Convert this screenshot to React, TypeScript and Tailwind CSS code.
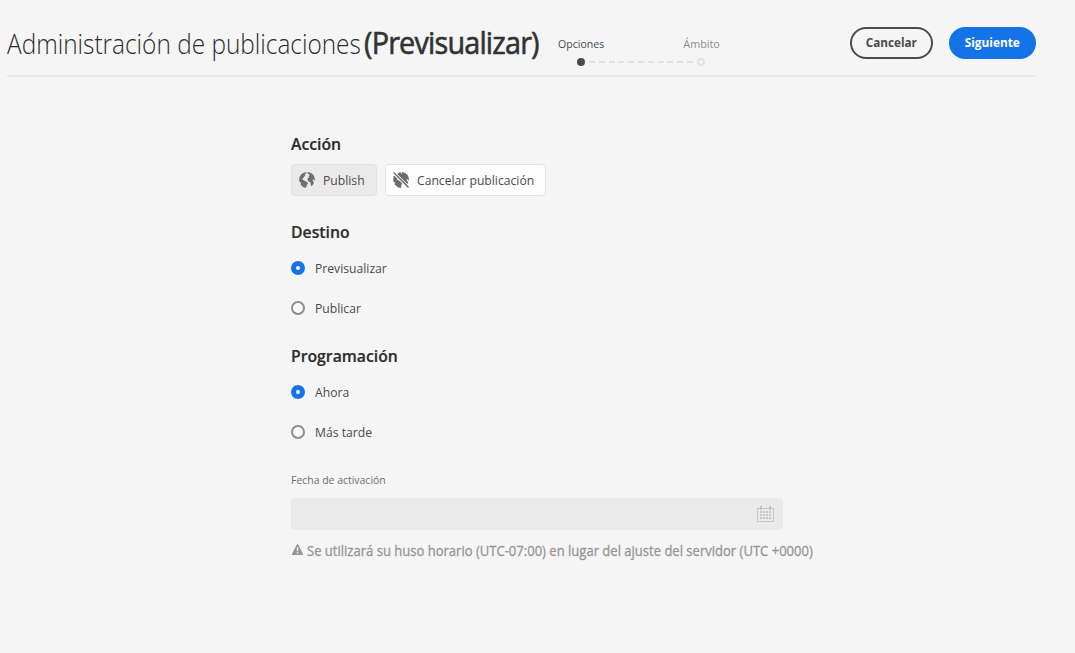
import { useState, type ReactNode } from 'react';

function GlobeIcon() {
  return (
    <svg className="size-4 shrink-0 fill-[#6e6e6e]" viewBox="0 0 16 16" aria-hidden="true">
      <path d="M5.8 0.4 L7.6 0.1 L7.2 1.4 L5.6 2.4 L6.4 3.6 L5.2 4.4 L4.8 5.6 L3.4 6.6 L3.6 7.8 L5 8.2 L6.2 9.2 L8.4 10 L8.8 11.6 L7.8 13 L7.6 14.4 L6.6 15.8 C4.6 15.4 2.9 14.2 1.7 12.7 L1.9 10.8 L0.3 9.2 C-0.2 6.2 0.9 3.2 3.2 1.6 Z" />
      <path d="M8.8 0.1 L10.8 0.5 C13 1.3 14.6 2.9 15.4 5 L16 7.8 L15.4 8.8 L14.6 7.6 L13.4 7.8 L14.2 9.4 L14.9 10.2 L14 12.6 L12.4 14.2 L11.6 12.2 L11.6 10.4 L9.6 9.4 L8.4 7.8 L8.9 6 L10.6 5.2 L9.4 4.4 L10.6 3.2 L9.8 2 L8.4 1.4 Z" />
    </svg>
  );
}

function GlobeStrikeIcon() {
  return (
    <svg className="size-4 shrink-0 fill-[#6e6e6e]" viewBox="0 0 16 16" aria-hidden="true">
      <path d="M0.4 4.2 L1.4 3.8 L4.6 7 L3.8 7.8 L5.4 8.2 L6.4 8.8 L9.2 11.6 L8.4 13 L8 15.9 L5.2 15.4 L1.6 12.6 L1.9 10.8 L0.2 9.2 Z" />
      <path d="M4.8 1.2 L6.8 0.3 L7.8 0.2 L7.8 1.6 L8.8 1.6 L9.2 0.1 L12 0.9 L14.2 2.5 L15.4 4.6 L16 8 L15.4 8.8 L14.8 7.6 L13.4 7.6 L14.2 9.2 L15.3 10.2 L14.3 12 L4.8 2.4 Z" />
      <path d="M0.2 1 L1.2 0 L16 14.8 L15 15.9 Z" />
    </svg>
  );
}

function CalendarIcon() {
  return (
    <svg className="h-4 w-[18px] shrink-0" viewBox="0 0 18 16" shapeRendering="crispEdges" aria-hidden="true">
      <path fill="#c6c6c6" d="M0 2h17v14H0z M1 3v12h15V3z" fillRule="evenodd" />
      <path fill="#c6c6c6" d="M3 0h2v4H3z M12 0h2v4h-2z" />
      <path
        fill="#c6c6c6"
        d="M3 5h2v2H3zM6 5h2v2H6zM9 5h2v2H9zM12 5h2v2h-2zM3 8h2v2H3zM6 8h2v2H6zM9 8h2v2H9zM12 8h2v2h-2zM3 11h2v2H3zM6 11h2v2H6zM9 11h2v2H9zM12 11h2v2h-2z"
      />
    </svg>
  );
}

function AlertIcon() {
  return (
    <svg className="mt-[3px] h-[11px] w-3 shrink-0" viewBox="0 0 12 11" aria-hidden="true">
      <path fill="#959595" d="M6 0.3 Q6.5 -0.3 7 0.3 L12 10 Q12.1 10.8 11.5 11 H1.3 Q0.7 10.8 0.9 10 Z" />
      <path fill="#f5f5f5" d="M5.8 3.3h1.4v4H5.8z M5.8 8.2h1.4v1.5H5.8z" />
    </svg>
  );
}

function Heading({ children }: { children: ReactNode }) {
  return (
    <h2 className="h-6 w-fit origin-left scale-x-[0.985] text-[16px] leading-6 font-semibold text-[#2c2c2c] [-webkit-text-stroke:0.2px_#2c2c2c]">
      {children}
    </h2>
  );
}

function Radio({ label, checked, onSelect }: { label: string; checked: boolean; onSelect: () => void }) {
  return (
    <button type="button" role="radio" aria-checked={checked} onClick={onSelect} className="flex h-10 items-center gap-[10px]">
      <span
        className={
          checked
            ? 'size-[14px] rounded-full border-5 border-[#1473e6] bg-[#f5f5f5]'
            : 'size-[14px] rounded-full border-2 border-[#8e8e8e] bg-[#fafafa]'
        }
      />
      <span className="origin-left scale-x-[0.935] text-[13px] leading-5 text-[#4b4b4b]">{label}</span>
    </button>
  );
}

export default function App() {
  const [target, setTarget] = useState('Previsualizar');
  const [schedule, setSchedule] = useState('Ahora');

  return (
    <div className="h-[653px] w-[1075px] overflow-hidden bg-[#f5f5f5] pl-[7px] font-['Open_Sans',sans-serif] whitespace-nowrap">
      <header className="flex h-[77px] w-[1029px] border-b-2 border-[#eaeaea]">
        <h1 className="flex w-[551px] items-baseline pt-[21px]">
          <span className="w-[357px]">
            <span className="inline-block origin-left scale-x-[0.903] text-[27px] leading-[42px] font-light text-[#2c2c2c]">
              Administración de publicaciones
            </span>
          </span>
          <span className="origin-left scale-x-[0.93] text-[31px] leading-[42px] tracking-[-0.9px] text-[#323232] [-webkit-text-stroke:0.6px_#323232]">
            (Previsualizar)
          </span>
        </h1>
        <div className="w-[162px] pt-[35px]">
          <div className="flex justify-between text-[11.5px] leading-[18px]">
            <span className="origin-left scale-x-[0.92] text-[#4b4b4b]">Opciones</span>
            <span className="origin-right scale-x-[0.94] text-[#8e8e8e]">Ámbito</span>
          </div>
          <div className="mt-[5px] ml-[19px] flex items-center gap-1">
            <span className="size-2 rounded-full bg-[#4b4b4b]" />
            <span className="h-[2px] w-[104px] bg-[repeating-linear-gradient(90deg,#e1e1e1_0_6px,transparent_6px_9.8px)]" />
            <span className="size-2 rounded-full border-2 border-[#e1e1e1]" />
          </div>
        </div>
        <div className="ml-auto flex gap-4 pt-[27px] text-[13px] leading-[26px] font-bold">
          <button type="button" className="flex h-8 w-[83px] justify-center rounded-full border-2 border-[#4b4b4b] text-[#4b4b4b]">
            <span className="scale-x-[0.9]">Cancelar</span>
          </button>
          <button type="button" className="flex h-8 w-[87px] justify-center rounded-full border-2 border-[#1473e6] bg-[#1473e6] text-white">
            <span className="scale-x-[0.91]">Siguiente</span>
          </button>
        </div>
      </header>

      <main className="ml-[284px] pt-[55px]">
        <Heading>Acción</Heading>
        <div className="mt-2 flex gap-2 text-[13px] leading-5 text-[#4b4b4b]">
          <button type="button" className="flex h-8 w-[86px] items-center gap-2 rounded border border-[#e1e1e1] bg-[#eaeaea] pl-[7px]">
            <GlobeIcon />
            <span className="origin-left scale-x-[0.935]">Publish</span>
          </button>
          <button type="button" className="flex h-8 w-[161px] items-center gap-2 rounded border border-[#e1e1e1] bg-[#fdfdfd] pl-[7px]">
            <GlobeStrikeIcon />
            <span className="origin-left scale-x-[0.935]">Cancelar publicación</span>
          </button>
        </div>

        <div className="mt-6">
          <Heading>Destino</Heading>
          <div role="radiogroup" className="mt-1">
            {['Previsualizar', 'Publicar'].map((label) => (
              <Radio key={label} label={label} checked={target === label} onSelect={() => setTarget(label)} />
            ))}
          </div>
        </div>

        <div className="mt-4">
          <Heading>Programación</Heading>
          <div role="radiogroup" className="mt-1">
            {['Ahora', 'Más tarde'].map((label) => (
              <Radio key={label} label={label} checked={schedule === label} onSelect={() => setSchedule(label)} />
            ))}
          </div>
        </div>

        <div className="mt-[18px] h-5 w-fit origin-left scale-x-[0.95] text-[11px] leading-5 text-[#6e6e6e]">Fecha de activación</div>
        <div className="mt-2 flex h-8 w-[492px] items-center justify-end rounded bg-[#eaeaea] pr-2">
          <CalendarIcon />
        </div>
        <div className="mt-[11px] flex gap-1 text-[14px] leading-5 text-[#959595]">
          <AlertIcon />
          <span className="origin-left scale-x-[0.931] [-webkit-text-stroke:0.3px_#959595]">
            Se utilizará su huso horario (UTC-07:00) en lugar del ajuste del servidor (UTC +0000)
          </span>
        </div>
      </main>
    </div>
  );
}
